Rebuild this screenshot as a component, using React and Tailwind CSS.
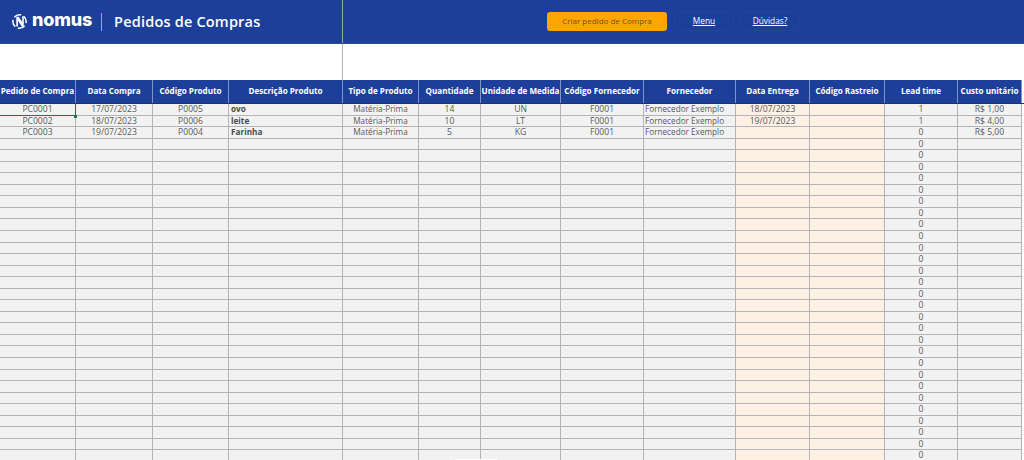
const columns = [
  { title: 'Pedido de Compra', width: 'w-[76px]', size: 'text-[8.6px] leading-[11px]' },
  { title: 'Data Compra', width: 'w-[77px]', size: 'text-[8.6px] leading-[11px]' },
  { title: 'Código Produto', width: 'w-[76px]', size: 'text-[8.6px] leading-[11px]' },
  { title: 'Descrição Produto', width: 'w-[114px]', size: 'text-[8.2px] leading-[10px]' },
  { title: 'Tipo de Produto', width: 'w-[76px]', size: 'text-[8.2px] leading-[10px]' },
  { title: 'Quantidade', width: 'w-[62px]', size: 'text-[8.6px] leading-[11px]' },
  { title: 'Unidade de Medida', width: 'w-[80px]', size: 'text-[8.6px] leading-[11px]' },
  { title: 'Código Fornecedor', width: 'w-[83px]', size: 'text-[8.6px] leading-[11px]' },
  { title: 'Fornecedor', width: 'w-[92px]', size: 'text-[8.2px] leading-[10px]' },
  { title: 'Data Entrega', width: 'w-[74px]', size: 'text-[8.6px] leading-[11px]' },
  { title: 'Código Rastreio', width: 'w-[75px]', size: 'text-[8.2px] leading-[10px]' },
  { title: 'Lead time', width: 'w-[73px]', size: 'text-[8.6px] leading-[11px]' },
  { title: 'Custo unitário', width: 'w-[64px]', size: 'text-[8.6px] leading-[11px]' },
];

const rows = [
  ['PC0001', '17/07/2023', 'P0005', 'ovo', 'Matéria-Prima', '14', 'UN', 'F0001', 'Fornecedor Exemplo', '18/07/2023', '', '1', 'R$ 1,00'],
  ['PC0002', '18/07/2023', 'P0006', 'leite', 'Matéria-Prima', '10', 'LT', 'F0001', 'Fornecedor Exemplo', '19/07/2023', '', '1', 'R$ 4,00'],
  ['PC0003', '19/07/2023', 'P0004', 'Farinha', 'Matéria-Prima', '5', 'KG', 'F0001', 'Fornecedor Exemplo', '', '', '0', 'R$ 5,00'],
];
while (rows.length < 31) {
  rows.push(['', '', '', '', '', '', '', '', '', '', '', '0', '']);
}

function cellClass(col) {
  let cls = 'shrink-0 h-full truncate border-r border-b border-[#b4b4b4] ' + columns[col].width + ' ' + columns[col].size;
  if (col === 3) cls += ' text-left font-bold text-[#4a4a4a] pl-[2px]';
  else if (col === 8) cls += ' text-left pl-px';
  else cls += ' text-center';
  cls += col === 9 || col === 10 ? ' bg-[#fdf0e4]' : ' bg-[#f2f2f2]';
  return cls;
}

function Logo() {
  return (
    <div className="flex items-center gap-[5px]">
      <svg width="15" height="15" viewBox="0 0 14 14">
        <circle cx="7" cy="7" r="6.2" fill="none" stroke="#ffffff" strokeWidth="1.4" strokeDasharray="7 2.7" strokeDashoffset="5.5" />
        <path d="M4 2.5h2.2l3.3 5V2.2H11v9.6H9.2L5.6 6.4v5.2H4z" fill="#ffffff" />
      </svg>
      <span className="text-white font-['Inter',sans-serif] font-extrabold text-[18px] tracking-[-0.2px] leading-none pb-[3px]">nomus</span>
    </div>
  );
}

export default function App() {
  return (
    <div className="relative w-[1024px] h-[460px] overflow-hidden bg-white font-['Open_Sans',sans-serif] text-[#595959]">
      <div className="flex h-[44px] bg-[#1c3f99] border-b border-[#2a4a96]">
        <div className="flex w-[343px] items-center pl-[12px] border-r border-[#a6a6a6]">
          <Logo />
          <div className="ml-[9px] h-[18px] w-[1px] shrink-0 bg-[#e8a317]" />
          <h1 className="ml-[12px] text-[14.5px] font-semibold tracking-[0.2px] text-white">Pedidos de Compras</h1>
        </div>
        <div className="flex items-center pb-[1px]">
          <button className="ml-[204px] w-[120px] h-[19px] rounded-[3px] bg-[#ffa500] text-[8px] text-[#6b5520]">Criar pedido de Compra</button>
          <button className="ml-[7px] w-[60px] h-[20px] rounded-[3px] border border-[#24449a] text-[8.3px] text-white underline">Menu</button>
          <button className="ml-[6px] w-[60px] h-[20px] rounded-[3px] border border-[#24449a] text-[8.3px] text-white underline">Dúvidas?</button>
        </div>
      </div>

      <div className="flex h-[36px]">
        <div className="w-[343px] border-r border-[#b4b4b4]" />
      </div>

      <div className="flex h-[24px] border-b border-[#16337c]">
        {columns.map((c) => (
          <div key={c.title} className={'shrink-0 flex items-center justify-center whitespace-nowrap overflow-hidden bg-[#1c3f99] border-r border-[#7f93c4] text-[8.1px] font-bold text-white ' + c.width}>
            {c.title}
          </div>
        ))}
      </div>

      <div className="relative">
        {rows.map((row, r) => (
          <div key={r} className="flex h-[11.55px]">
            {row.map((value, col) => (
              <div key={col} className={cellClass(col)}>{value}</div>
            ))}
          </div>
        ))}
        <div className="absolute left-0 top-0 w-[76px] h-[12px] border-b border-r border-[#217346]" />
        <div className="absolute left-[74px] top-[11px] w-[3px] h-[3px] bg-[#217346]" />
      </div>

      <div className="absolute bottom-0 left-[455px] w-[43px] h-[1px] rounded-t-sm bg-white" />
    </div>
  );
}
